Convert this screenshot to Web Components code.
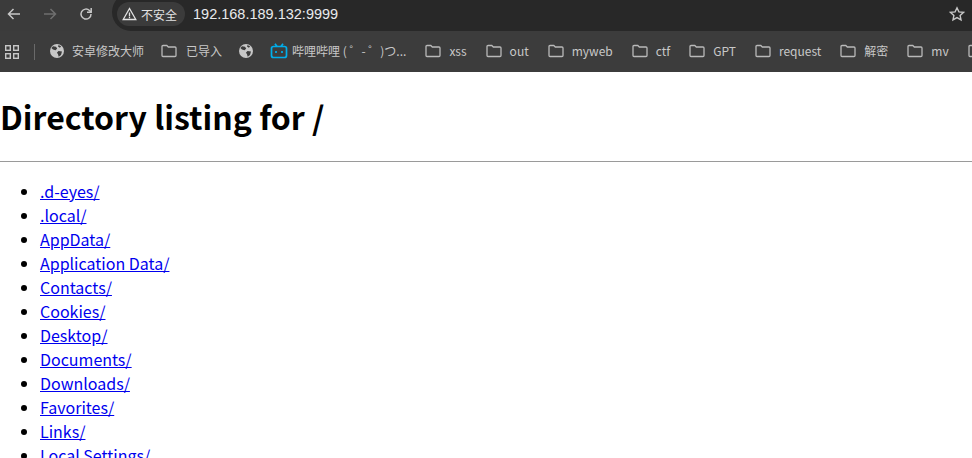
<!DOCTYPE html>
<html>
<head>
<meta charset="utf-8">
<title>Directory listing for /</title>
<style>
  html, body { margin: 0; padding: 0; height: 458px; overflow: hidden; background: #fff; }
</style>
</head>
<body>
<browser-toolbar address="192.168.189.132:9999" warning="不安全"></browser-toolbar>
<bookmark-bar>
  <bookmark-item icon="globe" style="margin-left:15px">安卓修改大师</bookmark-item>
  <bookmark-item icon="folder" style="margin-left:17px;gap:9px">已导入</bookmark-item>
  <bookmark-item icon="globe" style="margin-left:17px"></bookmark-item>
  <bookmark-item icon="bili" style="margin-left:9px;gap:4px">哔哩哔哩 ( ゜- ゜)つ...</bookmark-item>
  <bookmark-item icon="folder" style="margin-left:19px">xss</bookmark-item>
  <bookmark-item icon="folder" style="margin-left:19px">out</bookmark-item>
  <bookmark-item icon="folder" style="margin-left:19px">myweb</bookmark-item>
  <bookmark-item icon="folder" style="margin-left:19px">ctf</bookmark-item>
  <bookmark-item icon="folder" style="margin-left:19px">GPT</bookmark-item>
  <bookmark-item icon="folder" style="margin-left:19px">request</bookmark-item>
  <bookmark-item icon="folder" style="margin-left:19px">解密</bookmark-item>
  <bookmark-item icon="folder" style="margin-left:19px">mv</bookmark-item>
  <bookmark-item icon="folder" style="margin-left:19px"></bookmark-item>
</bookmark-bar>
<dir-listing heading="Directory listing for /">
  <dir-entry>.d-eyes/</dir-entry>
  <dir-entry>.local/</dir-entry>
  <dir-entry>AppData/</dir-entry>
  <dir-entry>Application Data/</dir-entry>
  <dir-entry>Contacts/</dir-entry>
  <dir-entry>Cookies/</dir-entry>
  <dir-entry>Desktop/</dir-entry>
  <dir-entry>Documents/</dir-entry>
  <dir-entry>Downloads/</dir-entry>
  <dir-entry>Favorites/</dir-entry>
  <dir-entry>Links/</dir-entry>
  <dir-entry>Local Settings/</dir-entry>
</dir-listing>
<script>
const UI_FONT = '"Noto Sans CJK SC", "Noto Sans", sans-serif'

// Toolbar with the nav buttons and the address pill.
customElements.define('browser-toolbar', class extends HTMLElement {
  constructor () {
    super()
    this.attachShadow({ mode: 'open' }).innerHTML = `
      <style>
        :host { display: flex; align-items: center; height: 31px; background: #3b3b3b; overflow: hidden; font-family: ${UI_FONT}; }
        .nav { display: flex; align-items: center; width: 112px; padding: 0 0 3px 6px; gap: 20px; box-sizing: border-box; flex: none; }
        svg { display: block; flex: none; }
        .omni { flex: 1; height: 38px; margin-top: -7px; display: flex; align-items: center; background: #282828; border-radius: 19px 0 0 19px; padding: 4px 0 0 5px; box-sizing: border-box; }
        .chip { display: flex; align-items: center; gap: 4px; height: 24px; padding: 0 8px 0 5px; border-radius: 12px; background: #3b3b3b; color: #e3e3e3; font-size: 12px; }
        .addr { margin-left: 8px; color: #e8eaed; font: 14.5px "Liberation Sans", Arial, sans-serif; flex: 1; }
        .star { margin-right: 7px; }
      </style>
      <div class="nav">
        <svg width="16" height="16" viewBox="0 0 16 16" fill="none" stroke="#c7c7c7" stroke-width="1.5"><path d="M14 8H2.500M7.500 3l-5 5 5 5"/></svg>
        <svg width="16" height="16" viewBox="0 0 16 16" fill="none" stroke="#6f6f6f" stroke-width="1.5"><path d="M2 8h11.500M8.500 3l5 5-5 5"/></svg>
        <svg width="16" height="16" viewBox="0 0 16 16" fill="none" stroke="#c7c7c7" stroke-width="1.5"><path d="M13 8a5 5 0 1 1-1.500-3.500L13 6"/><path d="M13.200 2v4.200H9" /></svg>
      </div>
      <div class="omni">
        <div class="chip">
          <svg width="15" height="14" viewBox="0 0 15 14" fill="none" stroke="#e3e3e3" stroke-width="1.3"><path d="M7.500 1.500L1.200 12.500h12.600z"/><path d="M7.500 5.500v4M7.500 10v1.200"/></svg>
          <span>${this.getAttribute('warning')}</span>
        </div>
        <span class="addr">${this.getAttribute('address')}</span>
        <svg class="star" width="16" height="16" viewBox="0 0 16 16" fill="none" stroke="#c7c7c7" stroke-width="1.4"><path d="M8 1.800l1.900 4.100 4.500.5-3.300 3 .9 4.400L8 11.600l-4 2.200.9-4.400-3.300-3 4.500-.5z"/></svg>
      </div>
    `
  }
})

// The bookmarks strip: apps icon, divider, then slotted items.
customElements.define('bookmark-bar', class extends HTMLElement {
  constructor () {
    super()
    this.attachShadow({ mode: 'open' }).innerHTML = `
      <style>
        :host { display: flex; align-items: center; height: 41px; background: #3c3c3c; overflow: hidden; white-space: nowrap; font-family: ${UI_FONT}; }
        svg { display: block; flex: none; margin-left: 5px; }
        .sep { width: 1px; height: 16px; background: #6a6a6a; margin-left: 15px; flex: none; }
      </style>
      <svg width="14" height="14" viewBox="0 0 14 14" fill="none" stroke="#c7c7c7" stroke-width="1.4"><rect x=".7" y=".7" width="4.600" height="4.600"/><rect x="8.700" y=".7" width="4.600" height="4.600"/><rect x=".7" y="8.700" width="4.600" height="4.600"/><rect x="8.700" y="8.700" width="4.600" height="4.600"/></svg>
      <div class="sep"></div>
      <slot></slot>
    `
  }
})

const ICONS = {
  globe: '<svg width="14" height="14" viewBox="0 0 14 14"><circle cx="7" cy="7" r="7" fill="#c7c7c7"/><path d="M3 2.200l3 .6 1.200 1.800-1.600 1.600-2.600-.6L1.400 4zM8.500 7l3.500.6L11 11l-2.300 1.800-.8-2.800-1-1.200zM8.600 1l2.600 1.400-1.400 1.400L8 2.600z" fill="#3c3c3c"/></svg>',
  folder: '<svg width="16" height="14" viewBox="0 0 16 14" fill="none" stroke="#b9b9b9" stroke-width="1.3"><path d="M1 2.500A1 1 0 0 1 2 1.500h3.800L7.300 3H14a1 1 0 0 1 1 1v7.500a1 1 0 0 1-1 1H2a1 1 0 0 1-1-1z"/></svg>',
  bili: '<svg width="18" height="16" viewBox="0 0 18 16" fill="none" stroke="#00aeec" stroke-width="1.7"><rect x="1.500" y="3.500" width="15" height="11" rx="2"/><path d="M5 .8l2 2.700M13 .8l-2 2.700"/><path d="M6 8v2M12 8v2"/></svg>'
}

customElements.define('bookmark-item', class extends HTMLElement {
  constructor () {
    super()
    this.attachShadow({ mode: 'open' }).innerHTML = `
      <style>
        :host { display: inline-flex; align-items: center; gap: 8px; flex: none; color: #c8c8c8; font-size: 12px; line-height: 17px; padding-bottom: 1px; }
        svg { display: block; }
        .label { margin-bottom: 2px; }
      </style>
      ${ICONS[this.getAttribute('icon')]}
      <span class="label"><slot></slot></span>
    `
  }
})

// Page content, like what python's http.server prints.
customElements.define('dir-listing', class extends HTMLElement {
  constructor () {
    super()
    this.attachShadow({ mode: 'open' }).innerHTML = `
      <style>
        :host { display: block; height: 386px; overflow: hidden; background: #fff; color: #000; font: 16px/24px ${UI_FONT}; }
        h1 { margin: 0; font-size: 32px; line-height: 47px; font-weight: 700; padding-top: 21px; height: 68px; }
        hr { margin: 0; height: 0; border: 0; border-top: 1px solid #9a9a9a; }
        ul { margin: 17px 0 0; padding: 0 0 0 40px; }
      </style>
      <h1>${this.getAttribute('heading')}</h1>
      <hr>
      <ul><slot></slot></ul>
    `
  }
})

customElements.define('dir-entry', class extends HTMLElement {
  constructor () {
    super()
    this.attachShadow({ mode: 'open' }).innerHTML = `
      <style>
        :host { display: list-item; }
        a { color: #0000ee; text-decoration: underline; }
      </style>
      <a href="#"><slot></slot></a>
    `
  }
})
</script>
</body>
</html>
